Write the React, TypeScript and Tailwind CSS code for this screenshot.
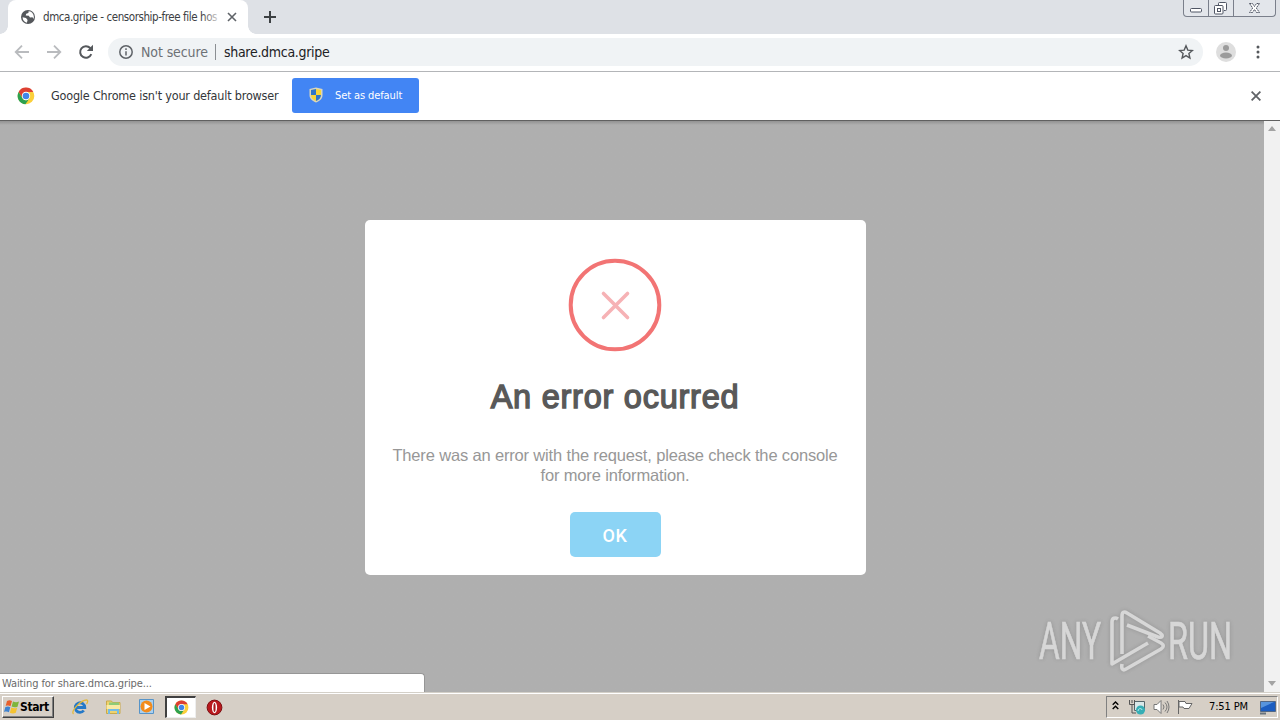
import type { ReactNode } from "react";

function ChromeLogo({ size }: { size: number }) {
  return (
    <svg width={size} height={size} viewBox="0 0 18 18">
      <circle cx="9" cy="9" r="8.3" fill="#fbcf3a" />
      <path d="M1.6 5A8.3 8.3 0 0 1 16.3 5H9A4.2 4.2 0 0 0 5.3 11Z" fill="#dd3f33" />
      <path d="M1.6 5A8.3 8.3 0 0 0 8.4 17.3L12.6 11.2A4.2 4.2 0 0 1 5.3 11Z" fill="#2da14f" />
      <circle cx="9" cy="9" r="4.2" fill="#fff" />
      <circle cx="9" cy="9" r="3.3" fill="#4285e8" />
    </svg>
  );
}

function TabStrip() {
  return (
    <div className="relative flex h-[34px] shrink-0 items-stretch bg-[#dee1e6] pl-2">
      <div className="relative flex w-60 items-center rounded-t-lg bg-white pl-3">
        <span className="absolute -left-2 bottom-0 size-2 bg-[radial-gradient(circle_at_0_0,#dee1e6_7.5px,#fff_8px)]" />
        <span className="absolute -right-2 bottom-0 size-2 bg-[radial-gradient(circle_at_100%_0,#dee1e6_7.5px,#fff_8px)]" />
        <svg width="16" height="16" viewBox="0 0 16 16" className="shrink-0">
          <circle cx="8" cy="8" r="7" fill="#54575b" />
          <path d="M2.6 8.2 6 9.1l1.6 1.8-.7 2.9A6 6 0 0 1 2.6 8.2ZM8.6 2.2l-.2 1.9-2.2.7-.5 1.8 3.1.1 1.2 1.8 2.5-.2 1 1.6A5.8 5.8 0 0 0 10.5 2.6Z" fill="#fff" />
        </svg>
        <div className="relative mt-px ml-[7px] w-[175px] text-[11.5px] tracking-[-0.42px] whitespace-nowrap text-[#3c4043]">
          dmca.gripe - censorship-free file hos
          <span className="absolute inset-y-0 right-0 w-4 bg-gradient-to-r from-transparent to-white/80" />
        </div>
        <svg width="10" height="10" viewBox="0 0 10 10" className="ml-[9px] shrink-0 stroke-[#5f6368] stroke-[1.6]">
          <path d="m1 1 8 8M9 1 1 9" />
        </svg>
      </div>
      <svg width="12" height="12" viewBox="0 0 12 12" className="mt-[11px] ml-4 stroke-[#3c4043] stroke-2">
        <path d="M6 0v12M0 6h12" />
      </svg>
      <div className="mr-1 ml-auto flex h-[17px] w-[93px] divide-x divide-[#7a7f8b] rounded-b border border-t-0 border-[#7a7f8b] bg-[#e3e6eb]">
        <WindowButton className="w-[25px]">
          <rect x="6.5" y="8.5" width="11" height="3.5" rx="1" />
        </WindowButton>
        <WindowButton className="w-[25px]">
          <path d="M9.5 5V3.5a1 1 0 0 1 1-1h6a1 1 0 0 1 1 1v6a1 1 0 0 1-1 1H15" />
          <rect x="5.5" y="5.5" width="8.5" height="8.5" rx="1" />
          <rect x="8.5" y="8.5" width="3" height="3" />
        </WindowButton>
        <WindowButton className="flex-1">
          <path d="M15.5 3.5h3l2 3 2-3h3l-3.2 4.5 3.2 4.5h-3l-2-3-2 3h-3l3.2-4.5Z" strokeDasharray="2 .6" />
        </WindowButton>
      </div>
    </div>
  );
}

function WindowButton({ className, children }: { className: string; children: ReactNode }) {
  return (
    <div className={className}>
      <svg width="41" height="16" viewBox="0 0 41 16" className="fill-white stroke-[#4f5564]">
        {children}
      </svg>
    </div>
  );
}

function Toolbar() {
  return (
    <div className="flex h-[38px] shrink-0 items-center border-b border-[#b3b5b8] bg-white pb-[2px] pl-[14px]">
      <svg width="16" height="16" viewBox="0 0 16 16" className="fill-none stroke-[#b9bbbe] stroke-[1.8]">
        <path d="M15 8H2M8 1.7 1.7 8 8 14.3" />
      </svg>
      <svg width="16" height="16" viewBox="0 0 16 16" className="ml-4 fill-none stroke-[#b9bbbe] stroke-[1.8]">
        <path d="M1 8h13M8 1.7 14.3 8 8 14.3" />
      </svg>
      <svg width="16" height="16" viewBox="0 0 16 16" className="ml-4 fill-none stroke-[#55585c] stroke-2">
        <path d="M13.3 10.2A5.8 5.8 0 1 1 12.2 4L14 5.8" />
        <path d="M15 .8V7H8.8Z" className="fill-[#55585c] stroke-none" />
      </svg>
      <div className="ml-[14px] flex h-7 w-[1095px] items-center rounded-full bg-[#f0f3f5] pr-[9px] pl-[11px] text-sm">
        <svg width="14" height="14" viewBox="0 0 14 14" className="fill-none stroke-[#5f6368] stroke-[1.5]">
          <circle cx="7" cy="7" r="6.2" />
          <path d="M7 6.2v4.3M7 3.3v1.6" />
        </svg>
        <span className="ml-2 w-[67px] tracking-[-0.1px] whitespace-nowrap text-[#6d7175]">Not secure</span>
        <span className="ml-[7px] h-4 w-px bg-[#8b8f93]" />
        <span className="ml-2 tracking-[-0.3px] text-[#202124]">share.dmca.gripe</span>
        <svg width="16" height="16" viewBox="0 0 16 16" className="ml-auto fill-none stroke-[#55585c] stroke-[1.4]">
          <path d="m8 1.8 1.8 4.3 4.6.4-3.5 3 1 4.5L8 11.6 4.1 14l1-4.500-3.500-3 4.600-.4Z" />
        </svg>
      </div>
      <svg width="20" height="20" viewBox="0 0 20 20" className="ml-[13px]">
        <circle cx="10" cy="10" r="10" fill="#dedede" />
        <circle cx="10" cy="6" r="3" fill="#9b9b9b" />
        <ellipse cx="10" cy="13.5" rx="6" ry="3" fill="#9b9b9b" />
      </svg>
      <svg width="4" height="14" viewBox="0 0 4 14" className="mt-px ml-5 fill-[#55585c]">
        <circle cx="2" cy="2" r="1.5" />
        <circle cx="2" cy="7" r="1.5" />
        <circle cx="2" cy="12" r="1.5" />
      </svg>
    </div>
  );
}

function DefaultBrowserBar() {
  return (
    <div className="flex h-12 shrink-0 items-center bg-white pr-[19px] pb-px pl-[17px]">
      <ChromeLogo size={18} />
      <span className="mt-[2px] ml-4 w-[229px] text-[12.5px] tracking-[-0.19px] whitespace-nowrap text-[#333639]">
        Google Chrome isn't your default browser
      </span>
      <button className="ml-3 flex h-[35px] w-[127px] items-center rounded-[3px] bg-[#4285f4] pl-[17px] text-[11px] text-white">
        <svg width="14" height="16" viewBox="0 0 14 16" className="mb-px">
          <path d="M7 .5 13.5 2v6c0 4-3 6-6.5 7.5C3.5 14 .5 12 .5 8V2Z" fill="#d8d5bd" />
          <path d="M7 2v6H2V3Z" fill="#2f76c7" />
          <path d="M7 2v6h5V3Z" fill="#f8d536" />
          <path d="M2 8h5v6C4 13 2 11 2 8Z" fill="#f8d536" />
          <path d="M12 8H7v6c3-1 5-3 5-6Z" fill="#2f76c7" />
        </svg>
        <span className="mt-[2px] ml-3 tracking-[-0.1px] whitespace-nowrap">Set as default</span>
      </button>
      <svg width="10" height="10" viewBox="0 0 10 10" className="mt-px ml-auto stroke-[#606367] stroke-[1.8]">
        <path d="m.6.6 8.8 8.8M9.4.6.6 9.4" />
      </svg>
    </div>
  );
}

function ErrorDialog() {
  return (
    <div className="mt-[99px] ml-[364.5px] flex h-[355px] w-[501px] flex-col items-center rounded-[5px] bg-white">
      <svg width="94" height="94" viewBox="0 0 94 94" className="mt-[38px] fill-none">
        <circle cx="47" cy="47" r="44.3" stroke="#f27474" strokeWidth="4" />
        <path d="m35.5 35.5 24 24M59.5 35.5l-24 24" stroke="#f6b2b5" strokeWidth="3.6" strokeLinecap="round" />
      </svg>
      <h1 className="mt-[25px] font-['Liberation_Sans'] text-[32.5px] leading-[40px] font-normal tracking-[0.75px] whitespace-nowrap text-[#595959] [-webkit-text-stroke:1.4px_#595959]">
        An error ocurred
      </h1>
      <p className="mt-[28px] text-center font-['Liberation_Sans'] text-[16.5px] leading-5 tracking-[-0.16px] whitespace-nowrap text-[#979797]">
        There was an error with the request, please check the console
        <br />
        for more information.
      </p>
      <button className="mt-[27px] h-[45px] w-[91px] rounded-[5px] bg-[#8cd4f5] pt-px font-['Roboto'] text-[18px] font-medium tracking-[0.5px] text-white">
        OK
      </button>
    </div>
  );
}

function Watermark() {
  return (
    <svg width="200" height="68" viewBox="0 0 200 68" className="absolute right-[44px] bottom-[18px] overflow-visible opacity-70 drop-shadow-[0_0_2px_#888]">
      <g fill="#e8e8e8" stroke="#e8e8e8" strokeWidth=".7" fontFamily="Roboto" fontSize="51">
        <text x="3" y="53" textLength="62" lengthAdjust="spacingAndGlyphs">ANY</text>
        <text x="132" y="53" textLength="64" lengthAdjust="spacingAndGlyphs">RUN</text>
      </g>
      <g fill="none" stroke="#e8e8e8" strokeWidth="3.6" strokeLinejoin="round">
        <path d="M82 13c-3-2-6-1-6 3v42l36-21" />
        <path d="M86 48V10c0-4 2-5 5-3l33 20c4 3 2 5-2 4L91 19" />
        <path d="M112 30l13 7c3 2 3 4 0 6L90 63c-3 2-5 0-4-5" />
      </g>
    </svg>
  );
}

function Scrollbar() {
  return (
    <div className="flex w-4 shrink-0 flex-col items-center justify-between bg-[#f1f1f1] pt-[5px] pb-[6px]">
      <svg width="8" height="5" viewBox="0 0 8 5" className="fill-[#a3a3a3]">
        <path d="M4 0 8 5H0Z" />
      </svg>
      <svg width="8" height="5" viewBox="0 0 8 5" className="fill-[#a3a3a3]">
        <path d="M0 0h8L4 5Z" />
      </svg>
    </div>
  );
}

function Taskbar() {
  return (
    <div className="flex h-7 shrink-0 items-start border-t border-[#d4d0c8] bg-[#d6cfc6] pl-[2px] shadow-[inset_0_1px_#fff]">
      <div className="mt-[3px] flex h-[22px] w-[52px] items-center border border-t-white border-r-[#404040] border-b-[#404040] border-l-white pl-px shadow-[inset_-1px_-1px_#808080]">
        <svg width="16" height="16" viewBox="0 0 16 16" className="shrink-0">
          <path d="M3 2c2-1 3-1 5 0L6.5 7.3C5 6.3 3.5 6.4 1.7 7Z" fill="#e8602c" />
          <path d="M9 2.5c2 1 4 1 6 0L13.5 7.7c-2 1-4 .8-5.9-.1Z" fill="#7fb53b" />
          <path d="M1.4 8c2-.7 3.3-.7 4.9.2L4.9 13.3C3.4 12.5 2 12.4 0 13Z" fill="#3f83d0" />
          <path d="M7.3 8.5c2 1 4 1 5.9.2L11.8 13.8c-2 1-4 .9-5.9-.1Z" fill="#f5c331" />
        </svg>
        <span className="text-[12px] font-bold tracking-[-0.4px] text-black">Start</span>
      </div>
      <div className="ml-[17px] flex items-center">
        <svg width="18" height="18" viewBox="0 0 18 18" className="mt-[3px] fill-none">
          <path d="M4.5 9.5h9.3a4.8 4.8 0 1 0-1 3" stroke="#2579c7" strokeWidth="2.8" />
          <path d="M2.5 16C-.5 13 10 2 15.5 2c2 0 1 3 0 4" stroke="#e3b93b" strokeWidth="1.3" />
        </svg>
        <svg width="18" height="18" viewBox="0 0 18 18" className="mt-[3px] ml-4">
          <path d="M1.5 3h5l1 1.5h7.5v11h-13.5Z" fill="#eed36e" stroke="#c9a94a" />
          <path d="M4 4.5h10v3H4Z" fill="#8ecb77" />
          <path d="M1.5 7h13.5v4H1.5Z" fill="#f9eaa4" />
          <path d="M4 16v-4h9v4" fill="none" stroke="#73bce6" strokeWidth="2" />
        </svg>
        <svg width="18" height="18" viewBox="0 0 18 18" className="mt-[3px] ml-[15px]">
          <path d="M1.5 1.5h14v14h-14Z" fill="#a9d0ef" stroke="#5794c8" />
          <circle cx="8.5" cy="8.5" r="6" fill="#f28b1c" />
          <path d="m6.5 5 6 3.5-6 3.5Z" fill="#fff" />
        </svg>
        <div className="mt-[3px] ml-[9px] flex h-[22px] w-[31px] items-center justify-center border border-t-2 border-l-2 border-t-[#404040] border-r-[#eee] border-b-[#eee] border-l-[#404040] bg-white pb-px">
          <ChromeLogo size={15} />
        </div>
        <svg width="17" height="17" viewBox="0 0 17 17" className="mt-[3px] ml-[10px]">
          <circle cx="8.5" cy="8.5" r="7.4" fill="#b9191d" stroke="#7c1013" />
          <ellipse cx="8.5" cy="8.5" rx="2.6" ry="5.8" fill="#fff" />
          <ellipse cx="8.5" cy="8.5" rx="1.1" ry="4.6" fill="#a9191d" />
        </svg>
      </div>
      <div className="mt-[3px] mr-[2px] ml-auto flex h-[22px] w-[172px] items-center border border-t-[#808080] border-r-white border-b-white border-l-[#808080] text-[11px] text-black">
        <svg width="7" height="9" viewBox="0 0 7 9" className="mb-[3px] ml-[5px] fill-none stroke-black stroke-[1.4]">
          <path d="m.7 3.8 2.8-2.8 2.8 2.8M.7 8l2.8-2.8L6.3 8" />
        </svg>
        <svg width="17" height="16" viewBox="0 0 17 16" className="ml-[10px]">
          <path d="M5.5 2.5h10v9h-10Z" fill="#d9e8e9" stroke="#56666b" />
          <path d="M.5 1v4.5h5V1M3 1v3M3 6v8h4" fill="none" stroke="#555" />
          <circle cx="11.5" cy="11" r="4.5" fill="#36aeb5" />
          <path d="M9 12c0-3 4-3 4-1" fill="none" stroke="#bdebed" />
        </svg>
        <svg width="17" height="16" viewBox="0 0 17 16" className="ml-[7px] fill-white stroke-[#777]">
          <path d="M1 5.5h3l4-4v13l-4-4H1Z" />
          <path d="M10 5.5q2 2.5 0 5M12 3.5q4 4.5 0 9M14 2q4 6 0 12" fill="none" />
        </svg>
        <svg width="17" height="16" viewBox="0 0 17 16" className="ml-[7px] fill-white stroke-[#666]">
          <path d="M1.5 1v14M2 2.5h6l1 2h6l-3 5H7l-1-1.5H2Z" />
        </svg>
        <span className="mt-px ml-[15px] w-[41px] tracking-[-0.14px] whitespace-nowrap">7:51 PM</span>
        <svg width="16" height="15" viewBox="0 0 16 15" className="ml-[10px]">
          <path d="M.5 1.5h15v10H.5Z" fill="#1c5dc0" stroke="#526784" />
          <path d="M1 2h13L1 8Z" fill="#5794dd" />
          <path d="M0 13.5h6" stroke="#69737d" strokeWidth="2" />
        </svg>
      </div>
    </div>
  );
}

export default function App() {
  return (
    <div className="flex h-[720px] w-[1280px] flex-col overflow-hidden bg-white font-['DejaVu_Sans_Condensed','DejaVu_Sans',sans-serif]">
      <TabStrip />
      <Toolbar />
      <DefaultBrowserBar />
      <div className="relative flex min-h-0 flex-1 border-t border-[#606060] bg-[#afafaf]">
        <div className="relative flex-1 overflow-hidden bg-linear-to-b from-[#929292] to-[#afafaf] to-[4px]">
          <ErrorDialog />
        </div>
        <Scrollbar />
        <Watermark />
        <div className="absolute bottom-0 left-0 flex h-[19px] w-[425px] items-center rounded-tr-[4px] border-t border-r border-[#969696] bg-white pt-[2px] pl-[2px] text-[11px] tracking-[-0.1px] text-[#6a6a6a]">
          Waiting for share.dmca.gripe...
        </div>
      </div>
      <Taskbar />
    </div>
  );
}
